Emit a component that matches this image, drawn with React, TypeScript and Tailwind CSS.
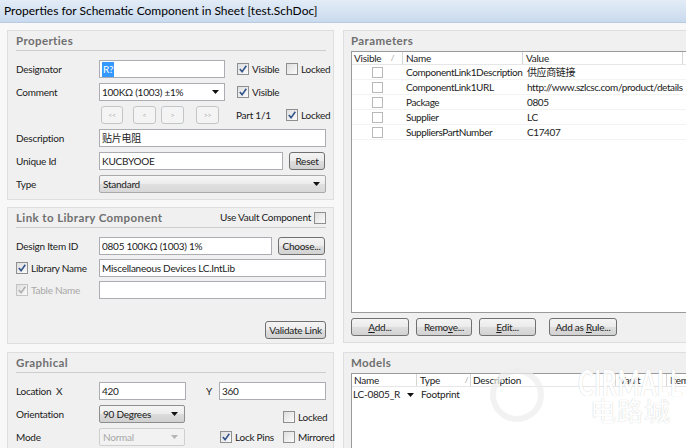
import React from "react";

const FONT = "[font-family:Lato,'Noto_Sans_CJK_SC',sans-serif]";

function Check({ checked = false, disabled = false, small = false }: { checked?: boolean; disabled?: boolean; small?: boolean }) {
  const size = small ? "w-[11px] h-[11px]" : "w-[12px] h-[12px]";
  const border = disabled ? "border-[#c4c4c4]" : small ? "border-[#b8b8b8]" : "border-[#8e8f8f]";
  return (
    <span className={`inline-flex shrink-0 items-center justify-center border ${border} ${size} ${small ? "bg-white" : "bg-[linear-gradient(135deg,#dedede,#fbfbfb)]"}`}>
      {checked && (
        <svg width="10" height="10" viewBox="0 0 10 10">
          <path d="M1.8 5 L4.1 7.6 L8.3 1.8" fill="none" stroke={disabled ? "#b0b0b0" : "#34548a"} strokeWidth="1.6" />
        </svg>
      )}
    </span>
  );
}

function Arrow({ color = "#111" }: { color?: string }) {
  return (
    <svg width="7" height="4" viewBox="0 0 7 4" className="shrink-0">
      <path d="M0 0 H7 L3.5 4 Z" fill={color} />
    </svg>
  );
}

function Input({ className = "", children }: { className?: string; children?: React.ReactNode }) {
  return (
    <div className={`shrink-0 h-[18px] border border-[#abadb3] bg-white flex items-center px-[2px] whitespace-nowrap overflow-hidden ${className}`}>
      {children}
    </div>
  );
}

function Btn({ className = "", children, disabled = false }: { className?: string; children?: React.ReactNode; disabled?: boolean }) {
  return (
    <div
      className={`shrink-0 h-[18px] rounded-[3px] border flex items-center justify-center whitespace-nowrap ${
        disabled
          ? "border-[#c3c6c9] bg-[#f4f4f4] text-[#b0b0b0]"
          : "border-[#707070] bg-[linear-gradient(to_bottom,#f4f4f4_0%,#ebebeb_50%,#dedede_51%,#d2d2d2_100%)] text-[#1b1b1b]"
      } ${className}`}
    >
      {children}
    </div>
  );
}

function Label({ children, className = "" }: { children?: React.ReactNode; className?: string }) {
  return <div className={`w-[83px] shrink-0 whitespace-nowrap ${className}`}>{children}</div>;
}

function Header({ children, line = true }: { children?: React.ReactNode; line?: boolean }) {
  return (
    <div className={`h-[20px] shrink-0 flex items-center justify-between ${line ? "border-b border-[#cdcdcd]" : ""}`}>
      {children}
    </div>
  );
}

function Title({ children }: { children?: React.ReactNode }) {
  return <span className="font-bold text-[11.5px] text-[#6f6f6f] tracking-[0.4px]">{children}</span>;
}

function CheckItem({ checked = false, children, className = "" }: { checked?: boolean; children?: React.ReactNode; className?: string }) {
  return (
    <div className={`shrink-0 flex items-center gap-[3px] whitespace-nowrap ${className}`}>
      <Check checked={checked} />
      <span>{children}</span>
    </div>
  );
}

export default function App() {
  return (
    <div className={`relative w-[686px] h-[448px] overflow-hidden bg-[#f8f8f8] text-[10px] tracking-[-0.25px] text-[#1b1b1b] ${FONT}`}>
      {/* title bar */}
      <div className="h-[23px] flex items-center pl-[4px] text-[12px] tracking-normal text-black bg-[linear-gradient(to_bottom,#e3ecf7,#c9daee)] border-b border-[#b9cbe0]">
        Properties for Schematic Component in Sheet [test.SchDoc]
      </div>

      <div className="flex pl-[7px] pt-[7px] gap-[9px]">
        {/* left column */}
        <div className="w-[327px] shrink-0 flex flex-col">
          {/* Properties */}
          <div className="h-[170px] border border-[#dedede] bg-[#f0f0f0] pl-[8px] pr-[7px]">
            <Header>
              <Title>Properties</Title>
            </Header>
            <div className="mt-[9px] flex flex-col gap-[5px]">
              <div className="h-[18px] flex items-center">
                <Label>Designator</Label>
                <Input className="w-[126px]">
                  <span className="bg-[#3399ff] text-white px-[1px]">R?</span>
                </Input>
                <CheckItem checked className="ml-[12px] w-[49px]">Visible</CheckItem>
                <CheckItem>Locked</CheckItem>
              </div>
              <div className="h-[18px] flex items-center">
                <Label>Comment</Label>
                <Input className="w-[126px] justify-between pr-[5px]">
                  <span>100KΩ (1003) ±1%</span>
                  <Arrow />
                </Input>
                <CheckItem checked className="ml-[12px]">Visible</CheckItem>
              </div>
              <div className="h-[18px] flex items-center">
                <div className="w-[85px] shrink-0" />
                <Btn disabled className="w-[22px] h-[15px] text-[7px]">&lt;&lt;</Btn>
                <Btn disabled className="ml-[10px] w-[23px] h-[15px] text-[7px]">&lt;</Btn>
                <Btn disabled className="ml-[5px] w-[23px] h-[15px] text-[7px]">&gt;</Btn>
                <Btn disabled className="ml-[12px] w-[23px] h-[15px] text-[7px]">&gt;&gt;</Btn>
                <span className="ml-[17px] w-[50px] shrink-0 whitespace-nowrap">Part 1/1</span>
                <CheckItem checked>Locked</CheckItem>
              </div>
              <div className="h-[18px] flex items-center">
                <Label>Description</Label>
                <Input className="flex-1">贴片电阻</Input>
              </div>
              <div className="h-[18px] flex items-center">
                <Label>Unique Id</Label>
                <Input className="w-[184px]">KUCBYOOE</Input>
                <Btn className="ml-[6px] w-[36px]">Reset</Btn>
              </div>
              <div className="h-[18px] flex items-center">
                <Label>Type</Label>
                <div className="flex-1 h-[18px] border border-[#a9a9a9] rounded-[2px] bg-[linear-gradient(to_bottom,#f6f6f6_0%,#ececec_50%,#e0e0e0_51%,#d8d8d8_100%)] flex items-center justify-between pl-[3px] pr-[5px]">
                  <span>Standard</span>
                  <Arrow />
                </div>
              </div>
            </div>
          </div>

          {/* Link to Library Component */}
          <div className="mt-[7px] h-[137px] border border-[#dedede] bg-[#f0f0f0] pl-[8px] pr-[7px] flex flex-col">
            <Header>
              <Title>Link to Library Component</Title>
              <div className="flex items-center gap-[3px] whitespace-nowrap">
                <span>Use Vault Component</span>
                <Check />
              </div>
            </Header>
            <div className="mt-[9px] flex flex-col gap-[4px]">
              <div className="h-[18px] flex items-center">
                <Label>Design Item ID</Label>
                <Input className="w-[173px]">0805 100KΩ (1003) 1%</Input>
                <Btn className="ml-[6px] w-[47px]">Choose...</Btn>
              </div>
              <div className="h-[18px] flex items-center">
                <Label className="flex items-center gap-[3px]">
                  <Check checked />
                  <span>Library Name</span>
                </Label>
                <Input className="flex-1">Miscellaneous Devices LC.IntLib</Input>
              </div>
              <div className="h-[18px] flex items-center">
                <Label className="flex items-center gap-[3px] text-[#a8a8a8]">
                  <Check checked disabled />
                  <span>Table Name</span>
                </Label>
                <Input className="flex-1" />
              </div>
            </div>
            <div className="mt-auto mb-[4px] flex justify-end">
              <Btn className="w-[61px]">Validate Link</Btn>
            </div>
          </div>

          {/* Graphical */}
          <div className="mt-[8px] h-[120px] border border-[#dedede] bg-[#f0f0f0] pl-[8px] pr-[7px]">
            <Header>
              <Title>Graphical</Title>
            </Header>
            <div className="mt-[9px] flex flex-col gap-[5px]">
              <div className="h-[18px] flex items-center">
                <Label>Location&nbsp; X</Label>
                <Input className="w-[87px]">420</Input>
                <span className="ml-[20px] w-[13px] shrink-0">Y</span>
                <Input className="flex-1">360</Input>
              </div>
              <div className="h-[18px] flex items-center">
                <Label>Orientation</Label>
                <div className="shrink-0 w-[86px] h-[18px] border border-[#8e8e8e] rounded-[2px] bg-[linear-gradient(to_bottom,#f6f6f6_0%,#ececec_50%,#dcdcdc_51%,#d0d0d0_100%)] flex items-center justify-between pl-[3px] pr-[6px]">
                  <span>90 Degrees</span>
                  <Arrow />
                </div>
                <CheckItem className="ml-[98px] mt-[6px]">Locked</CheckItem>
              </div>
              <div className="h-[18px] flex items-center">
                <Label>Mode</Label>
                <div className="shrink-0 w-[86px] h-[18px] border border-[#cfcfcf] rounded-[2px] bg-[#f2f2f2] text-[#a8a8a8] flex items-center justify-between pl-[3px] pr-[6px]">
                  <span>Normal</span>
                  <Arrow color="#b5b5b5" />
                </div>
                <CheckItem checked className="ml-[35px] w-[63px]">Lock Pins</CheckItem>
                <CheckItem>Mirrored</CheckItem>
              </div>
            </div>
          </div>
        </div>

        {/* right column */}
        <div className="w-[360px] shrink-0 flex flex-col">
          {/* Parameters */}
          <div className="h-[313px] border border-[#dedede] bg-[#f0f0f0] pl-[7px] flex flex-col">
            <Header line={false}>
              <Title>Parameters</Title>
            </Header>
            <div className="h-[262px] shrink-0 border border-[#9a9a9a] bg-white flex flex-col">
              <div className="h-[13px] flex items-center border-b border-[#e6e6e6] whitespace-nowrap">
                <div className="w-[51px] h-full flex items-center justify-between pl-[2px] pr-[8px] border-r border-[#d6d6d6]">
                  <span>Visible</span>
                  <span className="text-[#9a9a9a] text-[8px]">/</span>
                </div>
                <div className="w-[120px] h-full flex items-center pl-[3px] border-r border-[#d6d6d6]">Name</div>
                <div className="w-[160px] h-full flex items-center pl-[3px] border-r border-[#d6d6d6]">Value</div>
              </div>
              {[
                ["ComponentLink1Description", "供应商链接"],
                ["ComponentLink1URL", "http://www.szlcsc.com/product/details"],
                ["Package", "0805"],
                ["Supplier", "LC"],
                ["SuppliersPartNumber", "C17407"],
              ].map(([n, v]) => (
                <div key={n} className="h-[15px] flex items-center border-b border-[#f3f3f3] whitespace-nowrap tracking-[-0.4px]">
                  <div className="w-[51px] shrink-0 flex justify-center">
                    <Check small />
                  </div>
                  <div className="w-[120px] shrink-0 pl-[3px]">{n}</div>
                  <div className="w-[170px] shrink-0 pl-[4px] overflow-hidden">{v}</div>
                </div>
              ))}
            </div>
            <div className="mt-[5px] flex items-center">
              <Btn className="w-[58px]"><span><u>A</u>dd...</span></Btn>
              <Btn className="ml-[7px] w-[56px]"><span>Remo<u>v</u>e...</span></Btn>
              <Btn className="ml-[7px] w-[57px]"><span><u>E</u>dit...</span></Btn>
              <Btn className="ml-[13px] w-[68px]"><span>Add as <u>R</u>ule...</span></Btn>
            </div>
          </div>

          {/* Models */}
          <div className="mt-[9px] h-[120px] border border-[#dedede] bg-[#f0f0f0] pl-[7px] flex flex-col">
            <Header line={false}>
              <Title>Models</Title>
            </Header>
            <div className="flex-1 border border-[#9a9a9a] bg-white flex flex-col">
              <div className="h-[13px] flex items-center border-b border-[#e6e6e6] whitespace-nowrap">
                <div className="w-[65px] shrink-0 h-full flex items-center pl-[2px] border-r border-[#d6d6d6]">Name</div>
                <div className="w-[54px] shrink-0 h-full flex items-center justify-between pl-[3px] pr-[2px] border-r border-[#d6d6d6]">
                  <span>Type</span>
                  <span className="text-[#9a9a9a] text-[8px]">/</span>
                </div>
                <div className="w-[145px] shrink-0 h-full flex items-center pl-[2px] border-r border-[#d6d6d6]">Description</div>
                <div className="w-[51px] shrink-0 h-full flex items-center pl-[3px] border-r border-[#d6d6d6]">Vault</div>
                <div className="w-[40px] shrink-0 h-full flex items-center pl-[3px]">Item</div>
              </div>
              <div className="h-[15px] flex items-center whitespace-nowrap">
                <div className="w-[65px] shrink-0 flex items-center justify-between pl-[1px] pr-[3px]">
                  <span>LC-0805_R</span>
                  <Arrow />
                </div>
                <div className="pl-[4px]">Footprint</div>
              </div>
            </div>
          </div>
        </div>
      </div>

      {/* watermark */}
      <div className="pointer-events-none absolute left-[490px] top-[368px] w-[54px] h-[54px] rounded-full border-[6px] border-[#ececec] opacity-70" />
      <div className="pointer-events-none absolute left-[578px] top-[364px] origin-left scale-x-[0.65] whitespace-nowrap text-[36px] font-bold leading-none tracking-[1px] text-white opacity-90 [text-shadow:0_0_1px_#bdbdbd]">
        CIRMALL
      </div>
      <div className="pointer-events-none absolute left-[590px] top-[398px] whitespace-nowrap text-[26px] leading-none tracking-[1px] text-white opacity-90 [text-shadow:0_0_1px_#bdbdbd]">
        电路城
      </div>
    </div>
  );
}
